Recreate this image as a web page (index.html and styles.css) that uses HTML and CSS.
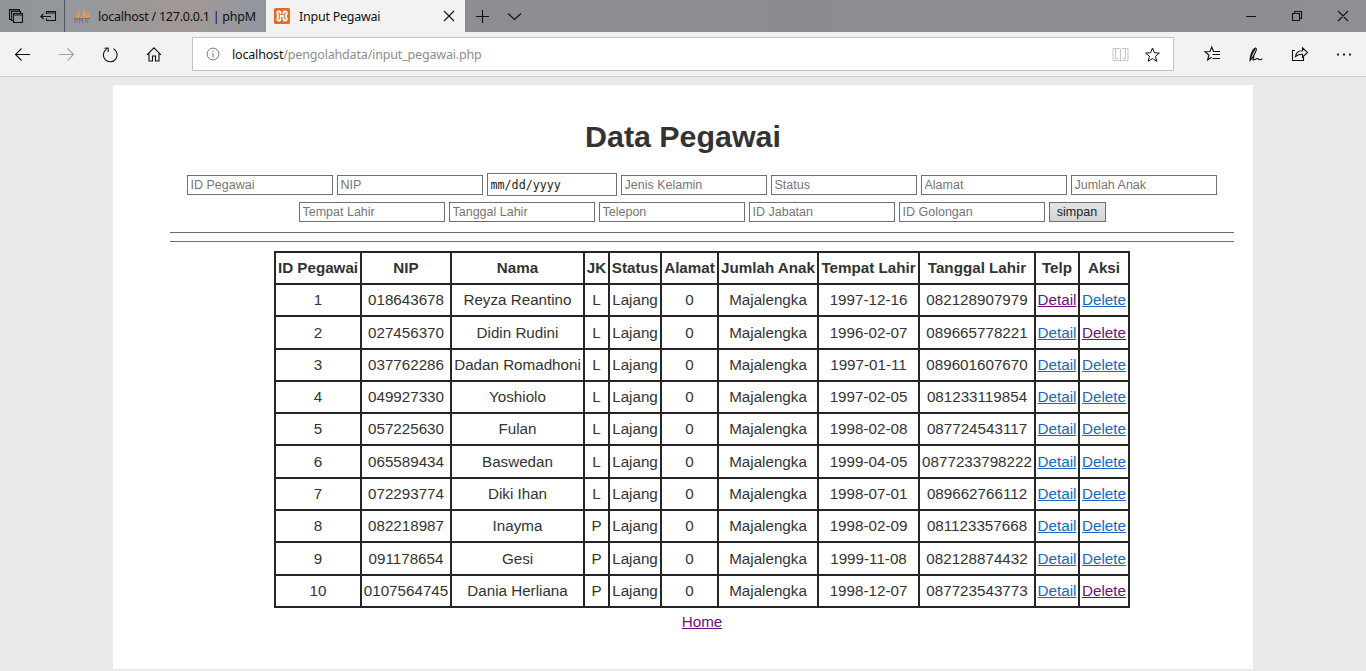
FILE: index.html
```html
<!DOCTYPE html>
<html lang="id">
<head>
<meta charset="utf-8">
<title>Input Pegawai</title>
<link rel="stylesheet" href="styles.css">
</head>
<body>
<header class="tabbar">
  <div class="tab-tools">
    <svg width="64" height="32" viewBox="0 0 64 32" class="ink">
      <path d="M11.500 19.500h-2v-10h10v2M13.500 20.500h-2v-9h9v2M13.500 13.500h9v9h-9zM13.500 15h9M9.500 10h10"/>
      <path d="M46.500 14v-2.500h9v9h-9v-2M46.500 13h9M41 16.500h10M43.500 14l-2.700 2.500 2.700 2.500"/>
    </svg>
  </div>
  <div class="tab tab-idle">
    <svg class="favicon" width="18" height="16" viewBox="0 0 18 16">
      <path d="M2 9.500C4 7 5.500 4 6 1.500c1 2.500 1 5.500.5 8zM7.500 9.500C9.500 7 10.500 4 10.500 0c2.500 3 3 6 2.500 9.500zM13.500 9.500c.7-2 .8-4 .3-6 2 1.500 2.700 3.700 3 6z" fill="#e79b45"/>
      <path d="M2 15v-4h2.500v2H2M6.500 15v-4l1.500 2 1.500-2v4M12 15l1.500-4 1.500 4M1 10.500h16" fill="none" stroke="#74758f"/>
    </svg>
    <span class="tab-text wide">localhost / 127.0.0.1 | phpM</span>
  </div>
  <div class="tab tab-active">
    <svg class="favicon" width="16" height="16" viewBox="0 0 16 16">
      <rect width="16" height="16" rx="1.500" fill="#e06c26"/>
      <path d="M6.500 6.300V4.700a1.300 1.300 0 0 0-1.300-1.300H4.600A1.300 1.300 0 0 0 3.300 4.700v.8c0 1.200 1 1.500 1 2.500s-1 1.300-1 2.500v.8a1.300 1.300 0 0 0 1.300 1.300h.6a1.300 1.300 0 0 0 1.300-1.300V9.200M9.500 6.300V4.700a1.300 1.300 0 0 1 1.300-1.300h.6a1.300 1.300 0 0 1 1.300 1.300v.8c0 1.200-1 1.500-1 2.500s1 1.300 1 2.500v.8a1.300 1.300 0 0 1-1.300 1.300h-.6a1.300 1.300 0 0 1-1.300-1.300V9.200M6 8h4" fill="none" stroke="#fff" stroke-width="1.800"/>
    </svg>
    <span class="tab-text active-text">Input Pegawai</span>
    <svg class="ink close" width="12" height="12" viewBox="0 0 12 12"><path d="M1 1l10 10M11 1L1 11"/></svg>
  </div>
  <svg class="ink" width="60" height="32" viewBox="0 0 60 32"><path d="M11 16.500h13M17.500 10v13M43 13.500l6.500 6 6.500-6"/></svg>
  <svg class="ink window-buttons" width="136" height="32" viewBox="0 0 136 32">
    <path d="M16 16.500h10M62.500 13.500v7h7v-7h-7zM64.500 13.500v-2h7v7h-2M108 11l10 10M118 11l-10 10"/>
  </svg>
</header>

<nav class="toolbar">
  <svg class="ink nav-icons" width="192" height="44" viewBox="0 0 192 44">
    <path d="M15.500 22.500H30M21.500 16.500l-6 6 6 6"/>
    <path class="faint" d="M59 22.500h14.500M67.500 16.500l6 6-6 6"/>
    <path d="M113.500 16.800a6.900 6.900 0 1 1-7 .3M104.500 16.200l3.700-.2v4"/>
    <path d="M147 22.800l7-7 7 7M149 21.500v7.500h3.500v-5h3v5h3.500v-7.500"/>
  </svg>
  <div class="address">
    <svg width="14" height="14" viewBox="0 0 14 14" class="info"><circle cx="7" cy="7" r="5.900"/><path d="M7 6v4.500M7 3.500V5"/></svg>
    <span class="url"><b>localhost</b>/pengolahdata/input_pegawai.php</span>
    <svg class="address-actions" width="60" height="32" viewBox="0 0 60 32">
      <path class="book" d="M7 10.500h6.500l1 1 1-1H22v12h-6.500l-1 .8-1-.8H7zM14.500 11v12M9.500 11v9.500h3M19.500 11v9.500h-3"/>
      <path class="star" d="M46.500 10l1.900 4.800 5 .3-3.900 3.200 1.300 5-4.300-2.800-4.300 2.800 1.300-5-3.900-3.200 5-.3z"/>
    </svg>
  </div>
  <svg class="ink right-icons" width="192" height="44" viewBox="0 0 192 44">
    <path d="M40 19.500h-.5L37.800 15 36 19.500l-5 .3 3.900 3.200-1.300 5 4-2.700M39.500 19.500H46M38.500 22.500H46M38.500 26.500H46"/>
    <path d="M76 28.500c0-3 2-11.500 5.500-12.500 2 .5 0 4-1.200 6.500s-2.300 4-4.300 6zM76.500 26c1.500-4 3-6.500 4.500-9M80 24l-1 3.700c1.500 1 3.500-2 4.700-1 1.400 1.600 2.300 1.700 4.600 0"/>
    <path d="M121 18.500h-2.500v10h11v-3.500M121.500 24.500c.5-4 3-5.700 7-5.700v-3l5 4.700-5 4.700v-3c-3 0-5 .5-7 2.300z"/>
    <path class="dots" d="M163 21.500h2v2h-2zM169 21.500h2v2h-2zM175 21.500h2v2h-2z"/>
  </svg>
</nav>

<main class="card">
  <h1>Data Pegawai</h1>
  <div class="content">
    <form>
      <div class="fields first">
        <input placeholder="ID Pegawai"><input placeholder="NIP"><input class="date" value="mm/dd/yyyy"><input placeholder="Jenis Kelamin"><input placeholder="Status"><input placeholder="Alamat"><input placeholder="Jumlah Anak">
      </div>
      <div class="fields second">
        <input placeholder="Tempat Lahir"><input placeholder="Tanggal Lahir"><input placeholder="Telepon"><input placeholder="ID Jabatan"><input placeholder="ID Golongan"><button type="button">simpan</button>
      </div>
    </form>
    <hr><hr>
    <table>
      <colgroup><col class="c-id"><col class="c-nip"><col class="c-nama"><col class="c-jk"><col class="c-status"><col class="c-alamat"><col class="c-anak"><col class="c-tempat"><col class="c-tanggal"><col class="c-telp"><col class="c-aksi"></colgroup>
      <tr><th>ID Pegawai</th><th>NIP</th><th>Nama</th><th>JK</th><th>Status</th><th>Alamat</th><th>Jumlah Anak</th><th>Tempat Lahir</th><th>Tanggal Lahir</th><th>Telp</th><th>Aksi</th></tr>
      <tr><td>1</td><td>018643678</td><td>Reyza Reantino</td><td>L</td><td>Lajang</td><td>0</td><td>Majalengka</td><td>1997-12-16</td><td>082128907979</td><td><a class="seen">Detail</a></td><td><a>Delete</a></td></tr>
      <tr class="tall"><td>2</td><td>027456370</td><td>Didin Rudini</td><td>L</td><td>Lajang</td><td>0</td><td>Majalengka</td><td>1996-02-07</td><td>089665778221</td><td><a>Detail</a></td><td><a class="seen">Delete</a></td></tr>
      <tr><td>3</td><td>037762286</td><td>Dadan Romadhoni</td><td>L</td><td>Lajang</td><td>0</td><td>Majalengka</td><td>1997-01-11</td><td>089601607670</td><td><a>Detail</a></td><td><a>Delete</a></td></tr>
      <tr><td>4</td><td>049927330</td><td>Yoshiolo</td><td>L</td><td>Lajang</td><td>0</td><td>Majalengka</td><td>1997-02-05</td><td>081233119854</td><td><a>Detail</a></td><td><a>Delete</a></td></tr>
      <tr><td>5</td><td>057225630</td><td>Fulan</td><td>L</td><td>Lajang</td><td>0</td><td>Majalengka</td><td>1998-02-08</td><td>087724543117</td><td><a>Detail</a></td><td><a>Delete</a></td></tr>
      <tr class="tall"><td>6</td><td>065589434</td><td>Baswedan</td><td>L</td><td>Lajang</td><td>0</td><td>Majalengka</td><td>1999-04-05</td><td>0877233798222</td><td><a>Detail</a></td><td><a>Delete</a></td></tr>
      <tr><td>7</td><td>072293774</td><td>Diki Ihan</td><td>L</td><td>Lajang</td><td>0</td><td>Majalengka</td><td>1998-07-01</td><td>089662766112</td><td><a>Detail</a></td><td><a>Delete</a></td></tr>
      <tr><td>8</td><td>082218987</td><td>Inayma</td><td>P</td><td>Lajang</td><td>0</td><td>Majalengka</td><td>1998-02-09</td><td>081123357668</td><td><a>Detail</a></td><td><a>Delete</a></td></tr>
      <tr class="tall"><td>9</td><td>091178654</td><td>Gesi</td><td>P</td><td>Lajang</td><td>0</td><td>Majalengka</td><td>1999-11-08</td><td>082128874432</td><td><a>Detail</a></td><td><a>Delete</a></td></tr>
      <tr><td>10</td><td>0107564745</td><td>Dania Herliana</td><td>P</td><td>Lajang</td><td>0</td><td>Majalengka</td><td>1998-12-07</td><td>087723543773</td><td><a>Detail</a></td><td><a class="seen">Delete</a></td></tr>
    </table>
    <p class="home"><a class="seen">Home</a></p>
  </div>
</main>
</body>
</html>
```

FILE: styles.css
```css
* { box-sizing: border-box; }
body {
  margin: 0;
  height: 671px;
  overflow: hidden;
  background: #e9e9e9;
  color: #333;
  font: 15.2px/24px "Liberation Sans", Arial, sans-serif;
}
svg { display: block; flex: none; }
.ink { fill: none; stroke: #111; stroke-width: 1.1; }

/* Browser tabs */
.tabbar {
  display: flex;
  height: 32px;
  background: linear-gradient(90deg, #92969b 0, #93979b 65px, #8d8e92 470px, #8b8c8f 800px, #8e8f92 100%);
  font: 12.5px/32px "Noto Sans", "Open Sans", sans-serif;
  color: #111;
}
.tab-tools { width: 64px; }
.tab { display: flex; align-items: center; white-space: nowrap; }
.tab-idle {
  width: 202px;
  padding-left: 8px;
  border-left: 1px solid #55585c;
  background: linear-gradient(90deg, #959a9f, #9c9795 35%, #a19896 65%, #9397a0 92%, #8f959d);
}
.tab-active { width: 199px; padding-left: 8px; background: #f2f2f2; }
.tab-text { margin-left: 7px; padding-top: 1px; letter-spacing: -0.25px; }
.active-text { margin-left: 9px; }
.close { margin-left: auto; margin-right: 10px; }
.window-buttons { margin-left: auto; }

/* Address toolbar */
.toolbar {
  display: flex;
  height: 45px;
  background: #f2f2f2;
  border-bottom: 1px solid #cbcbcb;
}
.faint { stroke: #a2a2a2; }
.address {
  display: flex;
  align-items: center;
  width: 982px;
  height: 34px;
  margin-top: 5px;
  padding-left: 13px;
  border: 1px solid #c3c3c3;
  background: #fff;
  font: 12.5px/32px "Noto Sans", "Open Sans", sans-serif;
  color: #8d8d8d;
}
.info { fill: none; stroke: #777; }
.url { margin-left: 12px; padding-top: 1px; letter-spacing: -0.17px; }
.url b { font-weight: 400; color: #111; }
.address-actions { margin-left: auto; margin-right: 7px; fill: none; stroke: #111; }
.address-actions .book { stroke: #c6c6c6; }
.ink .dots { fill: #222; stroke: none; }

/* Page */
.card {
  width: 1140px;
  height: 584px;
  margin: 8px 0 0 113px;
  padding: 31px 20px 0;
  background: #fff;
}
h1 { margin: 0; text-align: center; font-size: 30.4px; line-height: 41px; }
.content { padding-left: 37px; }
.fields { display: flex; justify-content: center; align-items: center; gap: 4px; height: 23px; }
.first { margin: 16px 0 4px; }
.second { padding-left: 1px; }
input, button {
  width: 146px;
  height: 20px;
  margin: 0;
  padding: 0 2px 0 3px;
  border: 1px solid #707070;
  border-radius: 0;
  background: #fff;
  color: #222;
  font: 12.5px "Liberation Sans", Arial, sans-serif;
}
input::placeholder { color: #757575; opacity: 1; }
.date { width: 130px; height: 23px; font: 11.7px "DejaVu Sans Mono", monospace; }
button { width: 57px; padding: 0; background: linear-gradient(#e4e4e4, #d4d4d4); }
hr { height: 1px; margin: 0 -1px 8px 0; border: 0; background: #6b6b6b; }
form { padding-bottom: 9px; }

table {
  table-layout: fixed;
  width: 856px;
  margin: 9px auto 0;
  border-collapse: collapse;
}
tr { height: 32px; }
.tall { height: 33px; }
th, td {
  padding: 0 0 0 1px;
  border: 2px solid #262626;
  text-align: center;
  line-height: 20px;
  white-space: nowrap;
}
.c-id { width: 86px; }
.c-nip { width: 90px; }
.c-nama { width: 133px; }
.c-jk { width: 25px; }
.c-status { width: 52px; }
.c-alamat { width: 57px; }
.c-anak { width: 100px; }
.c-tempat { width: 101px; }
.c-tanggal { width: 116px; }
.c-telp { width: 44px; }
.c-aksi { width: 50px; }
a { color: #1b66c0; text-decoration: underline; }
a.seen { color: #6c1179; }
.home { margin: 2px 0 0; padding-left: 1px; text-align: center; }
```
